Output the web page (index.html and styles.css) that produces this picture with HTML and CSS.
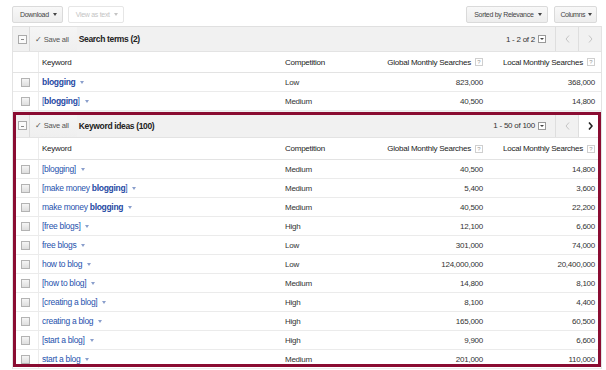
FILE: index.html
```html
<!DOCTYPE html>
<html>
<head>
<meta charset="utf-8">
<title>Keyword Tool</title>
<link rel="stylesheet" href="styles.css">
</head>
<body>
<div class="toolbar">
  <div class="tb-group">
    <span class="btn">Download <i class="caret"></i></span>
    <span class="btn disabled">View as text <i class="caret"></i></span>
  </div>
  <div class="tb-group right">
    <span class="btn">Sorted by Relevance <i class="caret"></i></span>
    <span class="btn compact">Columns <i class="caret"></i></span>
  </div>
</div>

<div class="panel">
  <section class="group">
    <div class="ghead">
      <span class="collapse"></span>
      <span class="save">✓ Save all</span>
      <h2 class="title">Search terms (2)</h2>
      <div class="pager">
        <span class="count">1 - 2 of 2</span><span class="ddbox"></span>
        <span class="nav"><svg width="5" height="8" viewBox="0 0 5 8"><path d="M4 0.5 L1 4 L4 7.5" fill="none" stroke="#c4c4c4" stroke-width="1"/></svg></span>
        <span class="nav"><svg width="5" height="8" viewBox="0 0 5 8"><path d="M1 0.5 L4 4 L1 7.5" fill="none" stroke="#c4c4c4" stroke-width="1"/></svg></span>
      </div>
    </div>
    <div class="row colhead">
      <span class="c-chk"></span>
      <span class="c-kw">Keyword</span>
      <span class="c-comp">Competition</span>
      <span class="c-num">Global Monthly Searches <i class="help">?</i></span>
      <span class="c-num">Local Monthly Searches <i class="help">?</i></span>
    </div>
    <div class="row"><span class="c-chk"><i class="cb"></i></span><span class="c-kw"><a class="kw"><b>blogging</b></a><i class="kcaret"></i></span><span class="c-comp">Low</span><span class="c-num">823,000</span><span class="c-num">368,000</span></div>
    <div class="row"><span class="c-chk"><i class="cb"></i></span><span class="c-kw"><a class="kw">[<b>blogging</b>]</a><i class="kcaret"></i></span><span class="c-comp">Medium</span><span class="c-num">40,500</span><span class="c-num">14,800</span></div>
  </section>

  <section class="group ideas">
    <div class="ghead">
      <span class="collapse"></span>
      <span class="save">✓ Save all</span>
      <h2 class="title">Keyword ideas (100)</h2>
      <div class="pager">
        <span class="count">1 - 50 of 100</span><span class="ddbox"></span>
        <span class="nav"><svg width="5" height="8" viewBox="0 0 5 8"><path d="M4 0.5 L1 4 L4 7.5" fill="none" stroke="#c4c4c4" stroke-width="1"/></svg></span>
        <span class="nav active"><svg width="5" height="8" viewBox="0 0 5 8"><path d="M1 0.5 L4 4 L1 7.5" fill="none" stroke="#222" stroke-width="1.6"/></svg></span>
      </div>
    </div>
    <div class="row colhead">
      <span class="c-chk"></span>
      <span class="c-kw">Keyword</span>
      <span class="c-comp">Competition</span>
      <span class="c-num">Global Monthly Searches <i class="help">?</i></span>
      <span class="c-num">Local Monthly Searches <i class="help">?</i></span>
    </div>
    <div class="row"><span class="c-chk"><i class="cb"></i></span><span class="c-kw"><a class="kw">[blogging]</a><i class="kcaret"></i></span><span class="c-comp">Medium</span><span class="c-num">40,500</span><span class="c-num">14,800</span></div>
    <div class="row"><span class="c-chk"><i class="cb"></i></span><span class="c-kw"><a class="kw">[make money <b>blogging</b>]</a><i class="kcaret"></i></span><span class="c-comp">Medium</span><span class="c-num">5,400</span><span class="c-num">3,600</span></div>
    <div class="row"><span class="c-chk"><i class="cb"></i></span><span class="c-kw"><a class="kw">make money <b>blogging</b></a><i class="kcaret"></i></span><span class="c-comp">Medium</span><span class="c-num">40,500</span><span class="c-num">22,200</span></div>
    <div class="row"><span class="c-chk"><i class="cb"></i></span><span class="c-kw"><a class="kw">[free blogs]</a><i class="kcaret"></i></span><span class="c-comp">High</span><span class="c-num">12,100</span><span class="c-num">6,600</span></div>
    <div class="row"><span class="c-chk"><i class="cb"></i></span><span class="c-kw"><a class="kw">free blogs</a><i class="kcaret"></i></span><span class="c-comp">Low</span><span class="c-num">301,000</span><span class="c-num">74,000</span></div>
    <div class="row"><span class="c-chk"><i class="cb"></i></span><span class="c-kw"><a class="kw">how to blog</a><i class="kcaret"></i></span><span class="c-comp">Low</span><span class="c-num">124,000,000</span><span class="c-num">20,400,000</span></div>
    <div class="row"><span class="c-chk"><i class="cb"></i></span><span class="c-kw"><a class="kw">[how to blog]</a><i class="kcaret"></i></span><span class="c-comp">Medium</span><span class="c-num">14,800</span><span class="c-num">8,100</span></div>
    <div class="row"><span class="c-chk"><i class="cb"></i></span><span class="c-kw"><a class="kw">[creating a blog]</a><i class="kcaret"></i></span><span class="c-comp">High</span><span class="c-num">8,100</span><span class="c-num">4,400</span></div>
    <div class="row"><span class="c-chk"><i class="cb"></i></span><span class="c-kw"><a class="kw">creating a blog</a><i class="kcaret"></i></span><span class="c-comp">High</span><span class="c-num">165,000</span><span class="c-num">60,500</span></div>
    <div class="row"><span class="c-chk"><i class="cb"></i></span><span class="c-kw"><a class="kw">[start a blog]</a><i class="kcaret"></i></span><span class="c-comp">High</span><span class="c-num">9,900</span><span class="c-num">6,600</span></div>
    <div class="row"><span class="c-chk"><i class="cb"></i></span><span class="c-kw"><a class="kw">start a blog</a><i class="kcaret"></i></span><span class="c-comp">Medium</span><span class="c-num">201,000</span><span class="c-num">110,000</span></div>
  </section>
</div>
</body>
</html>
```

FILE: styles.css
```css
* { box-sizing: border-box; margin: 0; padding: 0; }
html, body { background: #fff; }
body {
  width: 606px;
  height: 370px;
  overflow: hidden;
  font-family: "Liberation Sans", Arial, sans-serif;
  font-size: 8px;
  letter-spacing: -0.25px;
  white-space: nowrap;
  color: #222;
}

/* top toolbar */
.toolbar {
  height: 26px;
  display: flex;
  justify-content: space-between;
  align-items: flex-start;
  padding: 6px 9px 0 12px;
}
.tb-group { display: flex; gap: 5px; }
.tb-group.right { gap: 6px; }
.btn {
  height: 17px;
  display: inline-flex;
  align-items: center;
  gap: 4px;
  padding: 0 5px 0 7px;
  border: 1px solid #dadada;
  border-radius: 2px;
  background: linear-gradient(#f8f8f8, #ededed);
  font-size: 7px;
  letter-spacing: -0.3px;
  color: #444;
}
.btn.compact { padding: 0 4px 0 6px; gap: 3px; letter-spacing: -0.45px; }
.btn.disabled { background: #fff; border-color: #e6e6e6; color: #c4c4c4; }
.caret {
  width: 0; height: 0;
  border-left: 2.5px solid transparent;
  border-right: 2.5px solid transparent;
  border-top: 3px solid currentColor;
}

/* panel */
.panel {
  margin-left: 12px;
  width: 590px;
  border-left: 1px solid #e3e3e3;
  border-right: 1px solid #e3e3e3;
}
.group { position: relative; }
.ghead {
  height: 26px;
  display: flex;
  align-items: stretch;
  background: #f1f1f1;
  border-top: 1px solid #e0e0e0;
  border-bottom: 1px solid #e3e3e3;
}
.ideas .ghead { height: 27px; padding-top: 3px; border-top: 0; }
.ideas::after {
  content: "";
  position: absolute;
  left: 0; right: 0; top: 1px; bottom: 2px;
  border: 3px solid #8a0c32;
  pointer-events: none;
}
.collapse {
  width: 17px;
  display: flex;
  align-items: center;
  justify-content: center;
  border-right: 1px solid #dcdcdc;
  position: relative;
}
.collapse::before {
  content: "";
  width: 7px; height: 7px;
  border: 1px solid #aaa;
  background: #fafafa;
  margin-left: 3px;
}
.collapse::after {
  content: "";
  position: absolute;
  left: 8px; top: 50%;
  width: 3px; height: 1px;
  background: #888;
}
.save {
  display: flex;
  align-items: center;
  padding: 0 8px 0 5px;
  font-size: 7.5px;
  letter-spacing: -0.2px;
  color: #555;
  background: linear-gradient(#f5f5f5, #efefef);
}
.title {
  display: flex;
  align-items: center;
  margin-left: 2px;
  font-size: 8.5px;
  letter-spacing: -0.35px;
  font-weight: bold;
  color: #222;
}
.pager {
  margin-left: auto;
  display: flex;
  align-items: stretch;
}
.count { display: flex; align-items: center; color: #333; }
.ddbox {
  align-self: center;
  width: 8px; height: 8px;
  margin: 0 9px 0 3px;
  border: 1px solid #999;
  background: #fff;
  position: relative;
}
.ddbox::after {
  content: "";
  position: absolute;
  left: 1px; top: 2px;
  border-left: 2px solid transparent;
  border-right: 2px solid transparent;
  border-top: 2px solid #444;
}
.nav {
  width: 23px;
  display: flex;
  align-items: center;
  justify-content: center;
  border-left: 1px solid #dedede;
}
.nav.active { background: #fff; }

/* rows */
.row {
  display: grid;
  grid-template-columns: 26px 242px 100px 107px 113px;
  height: 19px;
  align-items: center;
  border-bottom: 1px solid #ebebeb;
  color: #333;
}
.row > span { display: flex; align-items: center; height: 100%; }
.colhead { height: 21px; color: #222; border-bottom-color: #e3e3e3; }
.ideas .colhead { height: 22px; }
.c-chk { justify-content: center; border-right: 1px solid #ececec; }
.c-kw { padding-left: 3px; }
.c-comp { padding-left: 4px; }
.c-num { justify-content: flex-end; padding-right: 5px; }
.c-num:last-child { padding-right: 6px; }
.cb {
  width: 9px; height: 9px;
  border: 1px solid #b3b3b3;
  background: linear-gradient(#f5f5f5, #dedede);
}
.kw {
  color: #2652ad;
  text-decoration: none;
  font-size: 8.5px;
  letter-spacing: -0.3px;
}
.kw b { font-weight: bold; color: #1f49a3; }
.kcaret {
  margin-left: 5px;
  border-left: 2.5px solid transparent;
  border-right: 2.5px solid transparent;
  border-top: 3px solid #8a9fcc;
}
.help {
  display: inline-flex;
  align-items: center;
  justify-content: center;
  width: 8px; height: 8px;
  margin-left: 4px;
  border: 1px solid #cfcfcf;
  font-style: normal;
  font-size: 6px;
  letter-spacing: 0;
  color: #999;
}
```
